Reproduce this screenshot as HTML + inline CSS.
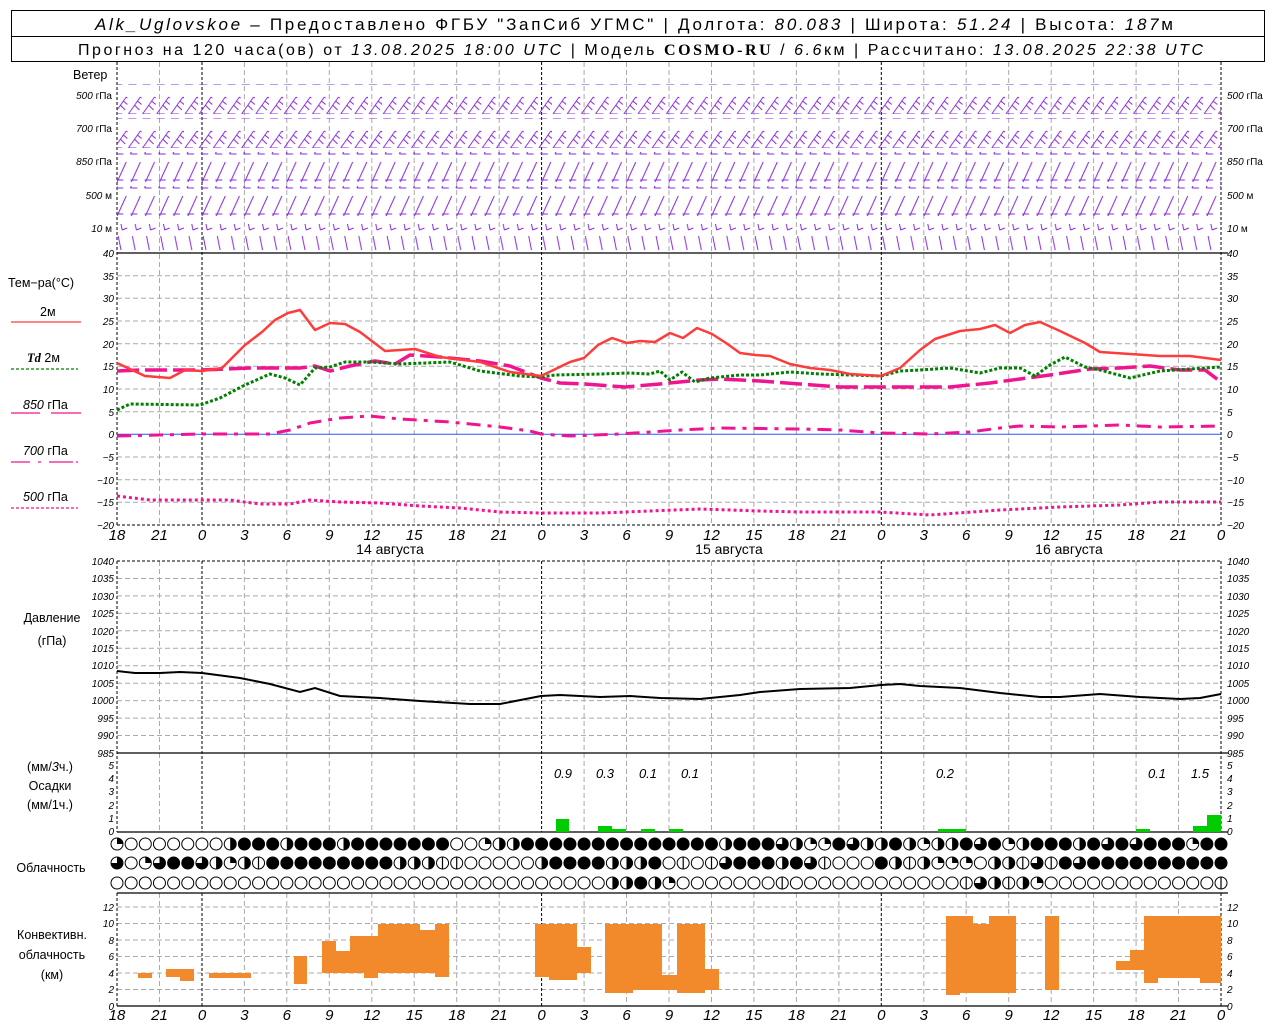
<!DOCTYPE html>
<html><head><meta charset="utf-8"><style>
html,body{margin:0;padding:0;background:#fff;width:1280px;height:1024px;overflow:hidden}
svg{display:block}
text{font-family:"Liberation Sans",sans-serif;fill:#000}
.t{font-size:10px;font-style:italic}
.ax{font-size:15px;font-style:italic}
.lb{font-size:12.5px}
</style></head><body>
<svg width="1280" height="1024" viewBox="0 0 1280 1024" xmlns="http://www.w3.org/2000/svg">
<defs>
<pattern id="wa" patternUnits="userSpaceOnUse" width="14.154" height="30">
<path d="M1,24 L13,7 M13,7 L19,12 M10,11 L16,16 M7,15 L12,20 M1,24 L9,24" stroke="#8a2be2" stroke-width="1" fill="none"/>
</pattern>
<pattern id="wc" patternUnits="userSpaceOnUse" width="14.154" height="30">
<path d="M3,26 L13,4 M3,26 L10,26 M3,22 L10,22" stroke="#8a2be2" stroke-width="1" fill="none"/>
</pattern>
<pattern id="wb" patternUnits="userSpaceOnUse" width="14.154" height="26">
<path d="M5,2 L9,22 M9,22 L14,20" stroke="#8a2be2" stroke-width="1" fill="none"/>
</pattern>
<circle id="b" r="6" fill="#000"/>
<path id="h" d="M0,-6 A6,6 0 0 1 0,6 Z" fill="#000"/>
<path id="tq" d="M0,0 L0,-6 A6,6 0 1 1 -6,0 Z" fill="#000"/>
<path id="q" d="M0,0 L0,-6 A6,6 0 0 1 6,0 Z" fill="#000"/>
<path id="l" d="M0,-6 V6" stroke="#000" stroke-width="1.2"/>
</defs>

<!-- header -->
<rect x="11.5" y="10.5" width="1253" height="51" fill="none" stroke="#000"/>
<line x1="11" y1="36.5" x2="1265" y2="36.5" stroke="#000"/>
<text x="95" y="30" font-size="17" textLength="1078" lengthAdjust="spacing"><tspan font-style="italic">Alk_Uglovskoe</tspan> – Предоставлено ФГБУ "ЗапСиб УГМС" | Долгота: <tspan font-style="italic">80.083</tspan> | Широта: <tspan font-style="italic">51.24</tspan> | Высота: <tspan font-style="italic">187</tspan>м</text>
<text x="78" y="55" font-size="16" textLength="1125" lengthAdjust="spacing">Прогноз на 120 часа(ов) от <tspan font-style="italic">13.08.2025 18:00 UTC</tspan>  | Модель <tspan font-family="Liberation Serif" font-weight="bold">COSMO-RU</tspan> / <tspan font-style="italic">6.6</tspan>км | Рассчитано: <tspan font-style="italic">13.08.2025 22:38 UTC</tspan></text>

<!-- grids -->
<g stroke="#aaa" stroke-dasharray="5,3" stroke-width="1" fill="none">
<path d="M159.5,62V525M159.5,561V832M159.5,893V1006 M244.4,62V525M244.4,561V832M244.4,893V1006 M286.8,62V525M286.8,561V832M286.8,893V1006 M329.3,62V525M329.3,561V832M329.3,893V1006 M371.8,62V525M371.8,561V832M371.8,893V1006 M414.2,62V525M414.2,561V832M414.2,893V1006 M456.7,62V525M456.7,561V832M456.7,893V1006 M499.2,62V525M499.2,561V832M499.2,893V1006 M584.1,62V525M584.1,561V832M584.1,893V1006 M626.5,62V525M626.5,561V832M626.5,893V1006 M669,62V525M669,561V832M669,893V1006 M711.5,62V525M711.5,561V832M711.5,893V1006 M753.9,62V525M753.9,561V832M753.9,893V1006 M796.4,62V525M796.4,561V832M796.4,893V1006 M838.9,62V525M838.9,561V832M838.9,893V1006 M923.8,62V525M923.8,561V832M923.8,893V1006 M966.2,62V525M966.2,561V832M966.2,893V1006 M1008.7,62V525M1008.7,561V832M1008.7,893V1006 M1051.2,62V525M1051.2,561V832M1051.2,893V1006 M1093.6,62V525M1093.6,561V832M1093.6,893V1006 M1136.1,62V525M1136.1,561V832M1136.1,893V1006 M1178.5,62V525M1178.5,561V832M1178.5,893V1006"/>
<path d="M117,275.7H1221M117,298.3H1221M117,321H1221M117,343.7H1221M117,366.3H1221M117,389H1221M117,411.7H1221M117,457H1221M117,479.7H1221M117,502.3H1221 M117,578.5H1221M117,595.9H1221M117,613.4H1221M117,630.8H1221M117,648.3H1221M117,665.7H1221M117,683.2H1221M117,700.6H1221M117,718.1H1221M117,735.5H1221 M117,907H1221M117,923.5H1221M117,940H1221M117,956.5H1221M117,973H1221M117,989.5H1221"/>
</g>
<g stroke="#000" stroke-dasharray="3,2" stroke-width="1" fill="none">
<path d="M117,62V525M117,561V832M117,893V1006 M202,62V525M202,561V832M202,893V1006 M541.6,62V525M541.6,561V832M541.6,893V1006 M881.3,62V525M881.3,561V832M881.3,893V1006 M1221,62V525M1221,561V832M1221,893V1006 M117,525H1221 M117,561H1221"/>
</g>
<g stroke="#000" stroke-width="1.3">
<line x1="117" y1="253" x2="1228" y2="253"/>
<line x1="117" y1="753" x2="1228" y2="753"/>
<line x1="117" y1="832" x2="1228" y2="832"/>
<line x1="117" y1="893" x2="1228" y2="893"/>
<line x1="117" y1="1006" x2="1228" y2="1006"/>
</g>

<!-- wind -->
<g>
<rect x="117" y="84" width="1104" height="30" fill="url(#wa)"/>
<g transform="translate(0,34)"><rect x="117" y="84" width="1104" height="30" fill="url(#wa)"/></g>
<g transform="translate(0,68)"><rect x="117" y="84" width="1104" height="30" fill="url(#wc)"/></g>
<g transform="translate(0,102)"><rect x="117" y="84" width="1104" height="30" fill="url(#wc)"/></g>
<rect x="117" y="224" width="1104" height="26" fill="url(#wb)"/>
</g>
<g class="t" font-size="10">
<text x="73" y="79" class="lb" style="font-style:normal">Ветер</text>
<text x="112" y="99" text-anchor="end">500 <tspan font-style="normal">гПа</tspan></text>
<text x="112" y="132" text-anchor="end">700 <tspan font-style="normal">гПа</tspan></text>
<text x="112" y="165" text-anchor="end">850 <tspan font-style="normal">гПа</tspan></text>
<text x="112" y="199" text-anchor="end">500 <tspan font-style="normal">  м</tspan></text>
<text x="112" y="232" text-anchor="end">10 <tspan font-style="normal">    м</tspan></text>
<text x="1227" y="99">500 <tspan font-style="normal">гПа</tspan></text>
<text x="1227" y="132">700 <tspan font-style="normal">гПа</tspan></text>
<text x="1227" y="165">850 <tspan font-style="normal">гПа</tspan></text>
<text x="1227" y="199">500 <tspan font-style="normal">  м</tspan></text>
<text x="1227" y="232">10 <tspan font-style="normal">    м</tspan></text>
</g>

<!-- temperature -->
<line x1="117" y1="434.3" x2="1221" y2="434.3" stroke="#3050ff" stroke-width="1"/>
<g fill="none" stroke-linejoin="round">
<polyline stroke="#f01490" stroke-width="3" stroke-dasharray="3,3" points="117,496 150,500 230,500 260,504 290,504 310,500 340,502 380,503 420,506 460,508 500,512 541,513 600,513 650,511 700,509 760,511 800,512 880,512 930,515 1000,510 1060,507 1120,505 1160,502 1221,502"/>
<polyline stroke="#f01490" stroke-width="3" stroke-dasharray="14,7,4,7" points="117,436 200,434 270,434 290,430 310,423 340,418 370,416 400,419 450,422 500,427 530,431 541,434 570,436 620,434 680,430 720,428 800,429 840,430 880,433 930,434 970,432 1000,428 1020,426 1060,427 1120,425 1160,427 1221,426"/>
<polyline stroke="#f01490" stroke-width="3.5" stroke-dasharray="22,6" points="117,371 140,370 200,370 250,368 300,368 315,366 330,371 350,366 375,361 395,364 410,355 440,357 480,361 510,366 541,378 560,383 585,384 625,387 660,384 700,380 720,379 760,381 800,384 840,387 881,387 950,387 990,383 1020,379 1050,375 1090,369 1120,368 1150,366 1180,370 1205,370 1221,382"/>
<polyline stroke="#008000" stroke-width="3" stroke-dasharray="3,2" points="117,410 130,404 200,405 220,398 245,385 270,374 285,378 300,385 315,368 330,367 345,362 370,362 400,364 450,362 480,371 520,376 541,377 555,375 600,374 630,373 650,374 660,371 670,380 682,372 695,382 710,378 740,375 760,375 790,372 820,374 850,375 881,376 900,371 920,370 950,368 980,373 1000,368 1020,368 1035,376 1050,365 1065,357 1085,367 1100,370 1130,378 1160,371 1190,369 1221,367"/>
<polyline stroke="#ff3c3c" stroke-width="2.5" points="117,363 145,376 170,378 185,370 202,371 222,368 245,345 262,332 275,320 288,313 300,310 315,330 330,323 345,324 360,332 385,351 415,349 440,357 480,362 510,372 541,376 570,362 584,358 598,345 612,338 627,343 640,341 655,342 670,333 683,338 697,328 712,334 726,343 740,353 755,355 770,356 790,364 810,368 830,370 850,374 881,376 900,368 920,350 935,339 960,331 980,329 995,325 1010,333 1025,325 1040,322 1060,331 1085,343 1100,352 1130,354 1160,356 1190,356 1221,360"/>
</g>
<g class="t">
<g text-anchor="end">
<text x="114" y="257">40</text><text x="114" y="280">35</text><text x="114" y="302">30</text><text x="114" y="325">25</text><text x="114" y="348">20</text><text x="114" y="370">15</text><text x="114" y="393">10</text><text x="114" y="416">5</text><text x="114" y="438">0</text><text x="114" y="461">−5</text><text x="114" y="484">−10</text><text x="114" y="506">−15</text><text x="114" y="529">−20</text>
</g>
<text x="1227" y="257">40</text><text x="1227" y="280">35</text><text x="1227" y="302">30</text><text x="1227" y="325">25</text><text x="1227" y="348">20</text><text x="1227" y="370">15</text><text x="1227" y="393">10</text><text x="1227" y="416">5</text><text x="1227" y="438">0</text><text x="1227" y="461">−5</text><text x="1227" y="484">−10</text><text x="1227" y="506">−15</text><text x="1227" y="529">−20</text>
</g>
<g class="lb">
<text x="8" y="287">Тем−ра(°C)</text>
<text x="40" y="316">2м</text>
<text x="27" y="362"><tspan font-style="italic" font-weight="bold" font-family="Liberation Serif">Td</tspan>  2м</text>
<text x="23" y="409"><tspan font-style="italic">850</tspan> гПа</text>
<text x="23" y="455"><tspan font-style="italic">700</tspan> гПа</text>
<text x="23" y="501"><tspan font-style="italic">500</tspan> гПа</text>
</g>
<g fill="none" stroke-width="1.3">
<line x1="11" y1="322" x2="81" y2="322" stroke="#ff3c3c"/>
<line x1="11" y1="369" x2="78" y2="369" stroke="#008000" stroke-dasharray="3,2"/>
<path d="M11,413H40M51,413H81" stroke="#f01490"/>
<path d="M11,462H30M38,462H41M49,462H73M76,462H78" stroke="#f01490"/>
<line x1="11" y1="508" x2="78" y2="508" stroke="#f01490" stroke-dasharray="3,2"/>
</g>

<!-- time labels -->
<g class="ax" text-anchor="middle">
<text x="117" y="540">18</text><text x="159.5" y="540">21</text><text x="202" y="540">0</text><text x="244.4" y="540">3</text><text x="286.8" y="540">6</text><text x="329.3" y="540">9</text><text x="371.8" y="540">12</text><text x="414.2" y="540">15</text><text x="456.7" y="540">18</text><text x="499.2" y="540">21</text><text x="541.6" y="540">0</text><text x="584.1" y="540">3</text><text x="626.5" y="540">6</text><text x="669" y="540">9</text><text x="711.5" y="540">12</text><text x="753.9" y="540">15</text><text x="796.4" y="540">18</text><text x="838.9" y="540">21</text><text x="881.3" y="540">0</text><text x="923.8" y="540">3</text><text x="966.2" y="540">6</text><text x="1008.7" y="540">9</text><text x="1051.2" y="540">12</text><text x="1093.6" y="540">15</text><text x="1136.1" y="540">18</text><text x="1178.5" y="540">21</text><text x="1221" y="540">0</text>
</g>
<g class="lb" text-anchor="middle">
<text x="390" y="554" font-size="14">14  августа</text>
<text x="729" y="554" font-size="14">15  августа</text>
<text x="1069" y="554" font-size="14">16  августа</text>
</g>

<!-- pressure -->
<polyline fill="none" stroke="#000" stroke-width="2" points="117,671 135,673 160,673 180,672 202,673 240,678 270,684 300,692 315,688 340,696 380,698 420,701 470,704 500,704 541,696 560,695 600,697 630,696 660,698 700,699 740,695 760,692 800,689 850,688 881,685 900,684 920,686 960,688 1000,693 1040,697 1060,697 1100,694 1140,697 1180,699 1200,698 1221,694"/>
<g class="t">
<g text-anchor="end">
<text x="114" y="565">1040</text><text x="114" y="582">1035</text><text x="114" y="600">1030</text><text x="114" y="617">1025</text><text x="114" y="635">1020</text><text x="114" y="652">1015</text><text x="114" y="669">1010</text><text x="114" y="687">1005</text><text x="114" y="704">1000</text><text x="114" y="722">995</text><text x="114" y="739">990</text><text x="114" y="757">985</text>
</g>
<text x="1227" y="565">1040</text><text x="1227" y="582">1035</text><text x="1227" y="600">1030</text><text x="1227" y="617">1025</text><text x="1227" y="635">1020</text><text x="1227" y="652">1015</text><text x="1227" y="669">1010</text><text x="1227" y="687">1005</text><text x="1227" y="704">1000</text><text x="1227" y="722">995</text><text x="1227" y="739">990</text><text x="1227" y="757">985</text>
</g>
<g class="lb" text-anchor="middle">
<text x="52" y="622">Давление</text>
<text x="52" y="645">(гПа)</text>
</g>

<!-- precip -->
<g fill="#00cc00">
<rect x="556" y="819" width="13" height="13"/>
<rect x="598" y="826" width="14" height="6"/>
<rect x="612" y="829" width="14" height="3"/>
<rect x="641" y="829" width="14" height="3"/>
<rect x="669" y="829" width="14" height="3"/>
<rect x="938" y="829" width="28" height="3"/>
<rect x="1136" y="829" width="14" height="3"/>
<rect x="1193" y="826" width="14" height="6"/>
<rect x="1207" y="815" width="14" height="17"/>
</g>
<g class="t">
<g text-anchor="end">
<text x="114" y="769">5</text><text x="114" y="782">4</text><text x="114" y="795">3</text><text x="114" y="809">2</text><text x="114" y="822">1</text><text x="114" y="835">0</text>
</g>
<text x="1227" y="769">5</text><text x="1227" y="782">4</text><text x="1227" y="795">3</text><text x="1227" y="809">2</text><text x="1227" y="822">1</text><text x="1227" y="835">0</text>
</g>
<g font-size="13" font-style="italic" text-anchor="middle">
<text x="563" y="778">0.9</text><text x="605" y="778">0.3</text><text x="648" y="778">0.1</text><text x="690" y="778">0.1</text><text x="945" y="778">0.2</text><text x="1157" y="778">0.1</text><text x="1200" y="778">1.5</text>
</g>
<g class="lb" text-anchor="middle">
<text x="50" y="771">(мм/<tspan font-style="italic">3</tspan>ч.)</text>
<text x="50" y="790">Осадки</text>
<text x="50" y="809">(мм/1ч.)</text>
<text x="51" y="872">Облачность</text>
<text x="52" y="939">Конвективн.</text>
<text x="52" y="959">облачность</text>
<text x="52" y="979">(км)</text>
</g>

<!-- clouds base -->
<g stroke-linecap="round" fill="none">
<path d="M117,844H1222M117,863H1222M117,883H1222" stroke="#000" stroke-width="13" stroke-dasharray="0 14.154"/>
<path d="M117,844H1222M117,863H1222M117,883H1222" stroke="#fff" stroke-width="11" stroke-dasharray="0 14.154"/>
</g>
<g>
<g transform="translate(0,844)">
<use href="#q" x="117"/><use href="#h" x="230.2"/><use href="#b" x="244.4"/><use href="#b" x="258.5"/><use href="#b" x="272.7"/><use href="#h" x="286.8"/><use href="#b" x="301"/><use href="#b" x="315.2"/><use href="#b" x="329.3"/><use href="#h" x="343.5"/><use href="#b" x="357.6"/><use href="#b" x="371.8"/><use href="#b" x="385.9"/><use href="#b" x="400.1"/><use href="#b" x="414.2"/><use href="#b" x="428.4"/><use href="#b" x="442.5"/><use href="#q" x="485"/><use href="#h" x="499.2"/><use href="#h" x="513.3"/>
<use href="#b" x="527.5"/><use href="#b" x="541.6"/><use href="#b" x="555.8"/><use href="#b" x="569.9"/><use href="#b" x="584.1"/><use href="#b" x="598.2"/><use href="#b" x="612.4"/><use href="#b" x="626.5"/><use href="#b" x="640.7"/><use href="#b" x="654.9"/><use href="#b" x="669"/><use href="#b" x="683.2"/><use href="#b" x="697.3"/><use href="#b" x="711.5"/><use href="#h" x="725.6"/><use href="#b" x="739.8"/><use href="#b" x="753.9"/><use href="#b" x="768.1"/><use href="#tq" x="782.2"/><use href="#h" x="796.4"/><use href="#q" x="810.5"/><use href="#q" x="824.7"/><use href="#b" x="838.9"/><use href="#tq" x="853"/><use href="#h" x="867.2"/><use href="#h" x="881.3"/><use href="#b" x="895.5"/><use href="#h" x="909.6"/><use href="#q" x="923.8"/><use href="#h" x="937.9"/><use href="#h" x="952.1"/><use href="#b" x="966.2"/><use href="#tq" x="980.4"/><use href="#b" x="994.5"/><use href="#q" x="1008.7"/><use href="#h" x="1022.8"/><use href="#b" x="1037"/><use href="#b" x="1051.2"/><use href="#b" x="1065.3"/><use href="#h" x="1079.5"/><use href="#b" x="1093.6"/><use href="#tq" x="1107.8"/><use href="#b" x="1121.9"/><use href="#tq" x="1136.1"/><use href="#b" x="1150.2"/><use href="#b" x="1164.4"/><use href="#b" x="1178.5"/><use href="#q" x="1192.7"/><use href="#b" x="1206.8"/><use href="#b" x="1221"/>
</g>
<g transform="translate(0,863)">
<use href="#tq" x="117"/><use href="#q" x="145.3"/><use href="#tq" x="159.5"/><use href="#b" x="173.6"/><use href="#b" x="187.8"/><use href="#tq" x="201.9"/><use href="#h" x="216.1"/><use href="#q" x="230.2"/><use href="#h" x="244.4"/><use href="#l" x="258.5"/><use href="#b" x="272.7"/><use href="#b" x="286.8"/><use href="#b" x="301"/><use href="#b" x="315.2"/><use href="#b" x="329.3"/><use href="#b" x="343.5"/><use href="#b" x="357.6"/><use href="#b" x="371.8"/><use href="#b" x="385.9"/><use href="#h" x="400.1"/><use href="#h" x="414.2"/><use href="#h" x="428.4"/><use href="#l" x="442.5"/><use href="#l" x="456.7"/><use href="#h" x="541.6"/><use href="#b" x="555.8"/><use href="#b" x="569.9"/><use href="#b" x="584.1"/><use href="#b" x="598.2"/><use href="#h" x="612.4"/><use href="#h" x="626.5"/><use href="#h" x="640.7"/><use href="#b" x="654.9"/><use href="#l" x="683.2"/><use href="#l" x="711.5"/><use href="#tq" x="725.6"/><use href="#b" x="739.8"/><use href="#b" x="753.9"/><use href="#b" x="768.1"/><use href="#h" x="782.2"/><use href="#b" x="796.4"/><use href="#tq" x="810.5"/><use href="#l" x="824.7"/><use href="#b" x="881.3"/><use href="#h" x="895.5"/><use href="#l" x="909.6"/><use href="#h" x="923.8"/><use href="#q" x="937.9"/><use href="#q" x="952.1"/><use href="#q" x="966.2"/><use href="#h" x="994.5"/><use href="#h" x="1008.7"/><use href="#l" x="1022.8"/><use href="#tq" x="1037"/><use href="#l" x="1051.2"/><use href="#b" x="1065.3"/><use href="#tq" x="1079.5"/><use href="#b" x="1093.6"/><use href="#b" x="1107.8"/><use href="#b" x="1121.9"/><use href="#b" x="1136.1"/><use href="#b" x="1150.2"/><use href="#b" x="1164.4"/><use href="#b" x="1178.5"/><use href="#b" x="1192.7"/><use href="#b" x="1206.8"/><use href="#b" x="1221"/>
</g>
<g transform="translate(0,883)">
<use href="#h" x="612.4"/><use href="#h" x="626.5"/><use href="#b" x="640.7"/><use href="#h" x="654.9"/><use href="#q" x="669"/><use href="#l" x="782.2"/><use href="#l" x="966.2"/><use href="#tq" x="980.4"/><use href="#h" x="994.5"/><use href="#l" x="1008.7"/><use href="#h" x="1022.8"/><use href="#q" x="1037"/><use href="#l" x="1221"/>
</g>
</g>

<!-- convective -->
<g fill="#f28a2c">
<rect x="138" y="973" width="14" height="5"/>
<rect x="166" y="969" width="28" height="8"/>
<rect x="180" y="969" width="14" height="12"/>
<rect x="209" y="973" width="14" height="5"/>
<rect x="223" y="973" width="28" height="5"/>
<rect x="294" y="956" width="13" height="28"/>
<rect x="322" y="941" width="14" height="32"/>
<rect x="336" y="951" width="14" height="22"/>
<rect x="350" y="936" width="14" height="37"/>
<rect x="364" y="936" width="14" height="42"/>
<rect x="378" y="924" width="42" height="49"/>
<rect x="420" y="930" width="15" height="43"/>
<rect x="435" y="924" width="14" height="53"/>
<rect x="535" y="924" width="14" height="53"/>
<rect x="549" y="924" width="28" height="56"/>
<rect x="577" y="947" width="14" height="26"/>
<rect x="605" y="924" width="28" height="69"/>
<rect x="633" y="924" width="29" height="66"/>
<rect x="662" y="975" width="15" height="15"/>
<rect x="677" y="924" width="28" height="69"/>
<rect x="705" y="969" width="14" height="21"/>
<rect x="946" y="916" width="14" height="79"/>
<rect x="960" y="916" width="13" height="77"/>
<rect x="973" y="924" width="16" height="69"/>
<rect x="989" y="916" width="27" height="77"/>
<rect x="1045" y="916" width="14" height="74"/>
<rect x="1116" y="961" width="14" height="9"/>
<rect x="1130" y="950" width="14" height="20"/>
<rect x="1144" y="916" width="14" height="67"/>
<rect x="1158" y="916" width="42" height="62"/>
<rect x="1200" y="916" width="21" height="67"/>
</g>
<g class="t">
<g text-anchor="end">
<text x="114" y="911">12</text><text x="114" y="927">10</text><text x="114" y="944">8</text><text x="114" y="960">6</text><text x="114" y="977">4</text><text x="114" y="993">2</text><text x="114" y="1010">0</text>
</g>
<text x="1227" y="911">12</text><text x="1227" y="927">10</text><text x="1227" y="944">8</text><text x="1227" y="960">6</text><text x="1227" y="977">4</text><text x="1227" y="993">2</text><text x="1227" y="1010">0</text>
</g>
<g class="ax" text-anchor="middle">
<text x="117" y="1020">18</text><text x="159.5" y="1020">21</text><text x="202" y="1020">0</text><text x="244.4" y="1020">3</text><text x="286.8" y="1020">6</text><text x="329.3" y="1020">9</text><text x="371.8" y="1020">12</text><text x="414.2" y="1020">15</text><text x="456.7" y="1020">18</text><text x="499.2" y="1020">21</text><text x="541.6" y="1020">0</text><text x="584.1" y="1020">3</text><text x="626.5" y="1020">6</text><text x="669" y="1020">9</text><text x="711.5" y="1020">12</text><text x="753.9" y="1020">15</text><text x="796.4" y="1020">18</text><text x="838.9" y="1020">21</text><text x="881.3" y="1020">0</text><text x="923.8" y="1020">3</text><text x="966.2" y="1020">6</text><text x="1008.7" y="1020">9</text><text x="1051.2" y="1020">12</text><text x="1093.6" y="1020">15</text><text x="1136.1" y="1020">18</text><text x="1178.5" y="1020">21</text><text x="1221" y="1020">0</text>
</g>
</svg>
</body></html>
